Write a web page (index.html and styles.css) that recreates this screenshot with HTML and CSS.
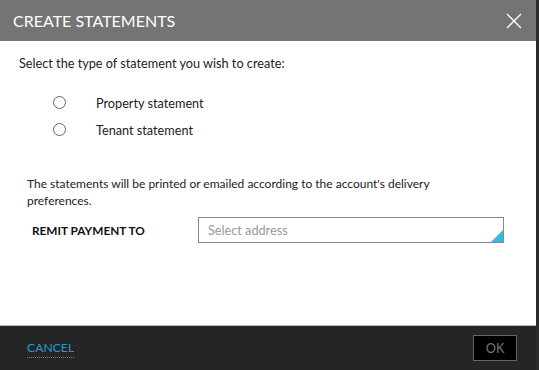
FILE: index.html
```html
<!DOCTYPE html>
<html lang="en">
    <head>
        <title>Create statements</title>
        <meta charset="UTF-8">
        <link rel="stylesheet" href="styles.css">
    </head>
    <body>
        <div class="dialog">
            <div class="dlgHead">
                <h2 class="title">CREATE STATEMENTS</h2>
                <a class="close" href="">
                    <svg width="16" height="16" viewBox="0 0 16 16"><path d="M1 1L15 15M15 1L1 15" stroke="#fff" stroke-width="1.3" fill="none"/></svg>
                </a>
            </div>
            <div class="dlgBody">
                <p class="intro">Select the type of statement you wish to create:</p>
                <ul class="types">
                    <li><span class="radio"></span>Property statement</li>
                    <li><span class="radio"></span>Tenant statement</li>
                </ul>
                <p class="note">The statements will be printed or emailed according to the account's delivery preferences.</p>
                <div class="row">
                    <label class="lbl">REMIT PAYMENT TO</label>
                    <div class="select">Select address<span class="corner"></span></div>
                </div>
            </div>
            <div class="dlgFoot">
                <a class="cancel" href="">CANCEL</a>
                <button class="ok">OK</button>
            </div>
        </div>
    </body>
</html>
```

FILE: styles.css
```css
body,p,ul,h2{margin: 0;padding: 0}
li{list-style: none}
a{text-decoration: none}

html,body{height: 100%;overflow: hidden}
body{background: #2a2a2a;font: 12.7px Lato, "Liberation Sans", sans-serif;color: #222}

.dialog{width: 536px;height: 370px;display: flex;flex-direction: column;background: #fff}

.dlgHead{height: 41px;background: #747474;display: flex;align-items: center;justify-content: space-between;padding: 0 14px 0 13px}
.title{font-size: 16px;font-weight: normal;color: #fff;letter-spacing: 0}
.close{display: flex;margin-top: 0}

.dlgBody{flex: 1;padding: 14px 0 0 19px;border-bottom: 1px solid #bbb}
.intro{line-height: 16px}
.types{margin: 18px 0 0 34px}
.types li{display: flex;align-items: center;height: 27px;line-height: 16px}
.radio{width: 11px;height: 11px;border: 1.5px solid #666;border-radius: 50%;margin-right: 30px}

.note{margin: 32px 0 0 8px;width: 420px;line-height: 17px;font-size: 12px}
.row{display: flex;align-items: center;margin: 8px 0 0 13px}
.lbl{width: 166px;font-weight: bold;color: #111;font-size: 11.8px}
.select{position: relative;width: 295px;height: 24px;border: 1px solid #888;color: #999;line-height: 24px;padding-left: 9px}
.corner{position: absolute;right: 0;bottom: 0;width: 0;height: 0;border-style: solid;border-width: 0 0 12px 12px;border-color: transparent transparent #2bbde6 transparent}

.dlgFoot{height: 44px;background: #252525;display: flex;align-items: center;justify-content: space-between;padding: 0 19px 0 27px}
.cancel{color: #1a9fcf;font-size: 12.2px;border-bottom: 1px dotted #1a9fcf;line-height: 15px;padding-bottom: 2px;margin-top: 2px}
.ok{width: 44px;height: 26px;background: #000;border: 1px solid #666;color: #777;font: 12.7px Lato, "Liberation Sans", sans-serif}
```
